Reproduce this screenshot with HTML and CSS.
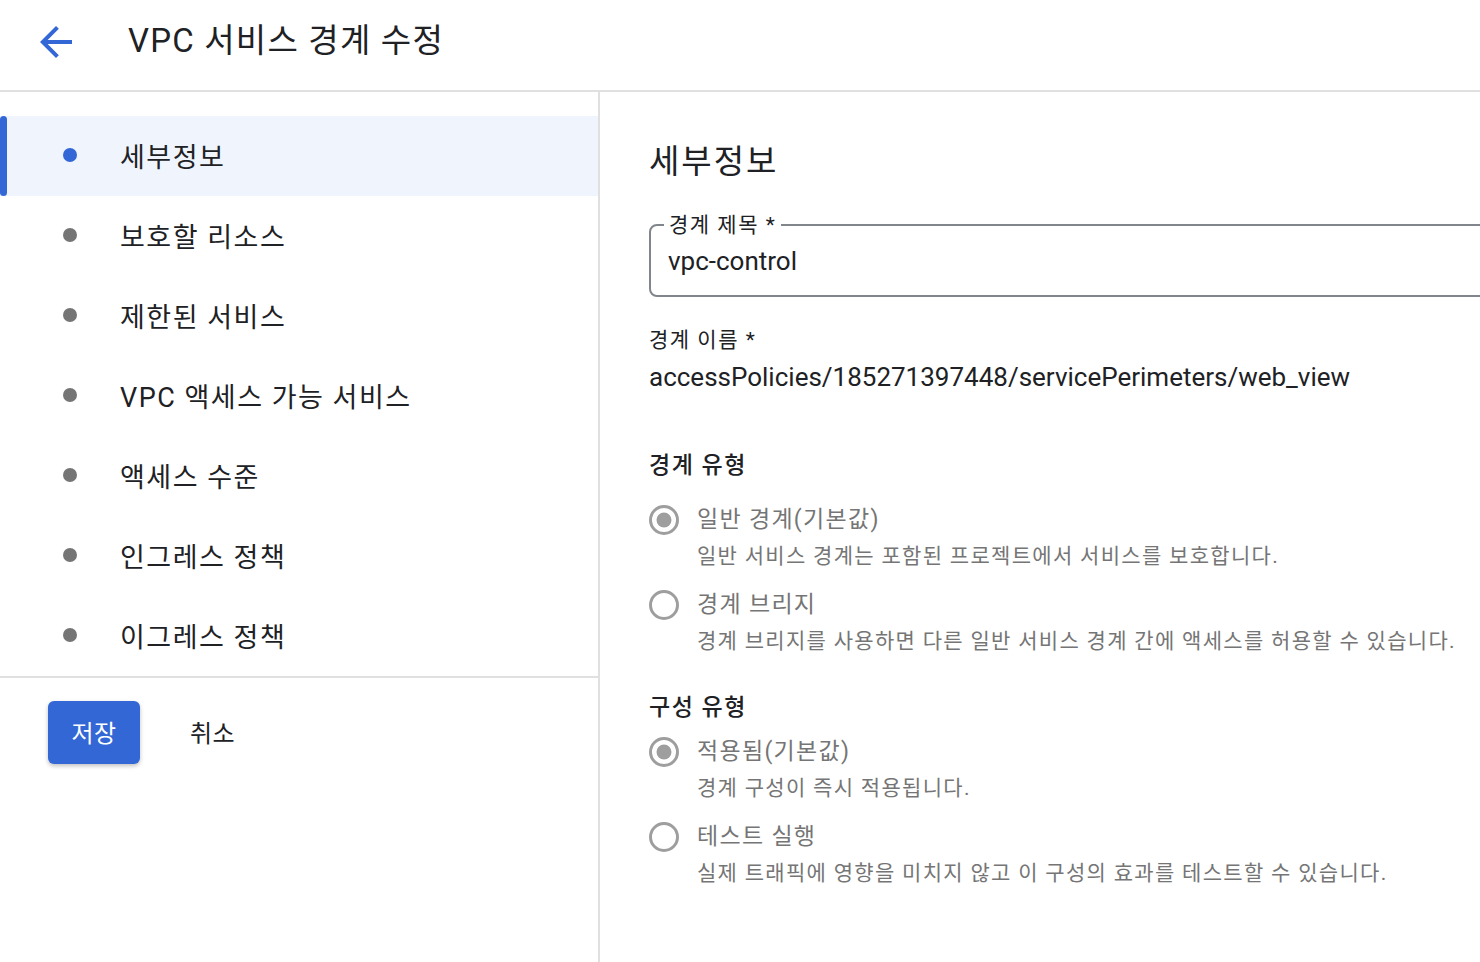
FILE: index.html
```html
<!DOCTYPE html>
<html lang="ko">
<head>
<meta charset="UTF-8">
<meta name="viewport" content="width=device-width, initial-scale=1.0">
<title>VPC 서비스 경계 수정</title>
<link rel="stylesheet" href="styles.css">
</head>
<body>

<header class="topbar">
  <a class="back" href="#" aria-label="뒤로">
    <svg width="48" height="48" viewBox="0 0 24 24"><path d="M20 11H7.83l5.59-5.59L12 4l-8 8 8 8 1.41-1.41L7.83 13H20v-2z" fill="#3367d6"/></svg>
  </a>
  <h1>VPC 서비스 경계 수정</h1>
</header>

<div class="layout">
  <aside class="sidebar">
    <nav class="steps">
      <a class="step active" href="#"><span class="dot"></span>세부정보</a>
      <a class="step" href="#"><span class="dot"></span>보호할 리소스</a>
      <a class="step" href="#"><span class="dot"></span>제한된 서비스</a>
      <a class="step" href="#"><span class="dot"></span>VPC 액세스 가능 서비스</a>
      <a class="step" href="#"><span class="dot"></span>액세스 수준</a>
      <a class="step" href="#"><span class="dot"></span>인그레스 정책</a>
      <a class="step" href="#"><span class="dot"></span>이그레스 정책</a>
    </nav>
    <div class="actions">
      <button class="btn-save" type="button">저장</button>
      <button class="btn-cancel" type="button">취소</button>
    </div>
  </aside>

  <main class="content">
    <h2>세부정보</h2>

    <fieldset class="outlined">
      <legend>경계 제목 *</legend>
      <input type="text" value="vpc-control">
    </fieldset>

    <div class="readonly">
      <div class="ro-label">경계 이름 *</div>
      <div class="ro-value">accessPolicies/185271397448/servicePerimeters/web_view</div>
    </div>

    <h3 class="group-title first">경계 유형</h3>
    <div class="radio">
      <svg class="radio-icon" width="30" height="30" viewBox="0 0 30 30"><circle cx="15" cy="15" r="13.5" fill="none" stroke="#9e9e9e" stroke-width="3"/><circle cx="15" cy="15" r="7.5" fill="#9e9e9e"/></svg>
      <div>
        <div class="radio-label">일반 경계(기본값)</div>
        <div class="radio-desc">일반 서비스 경계는 포함된 프로젝트에서 서비스를 보호합니다.</div>
      </div>
    </div>
    <div class="radio">
      <svg class="radio-icon" width="30" height="30" viewBox="0 0 30 30"><circle cx="15" cy="15" r="13.5" fill="none" stroke="#9e9e9e" stroke-width="3"/></svg>
      <div>
        <div class="radio-label">경계 브리지</div>
        <div class="radio-desc">경계 브리지를 사용하면 다른 일반 서비스 경계 간에 액세스를 허용할 수 있습니다.</div>
      </div>
    </div>

    <h3 class="group-title">구성 유형</h3>
    <div class="radio">
      <svg class="radio-icon" width="30" height="30" viewBox="0 0 30 30"><circle cx="15" cy="15" r="13.5" fill="none" stroke="#9e9e9e" stroke-width="3"/><circle cx="15" cy="15" r="7.5" fill="#9e9e9e"/></svg>
      <div>
        <div class="radio-label">적용됨(기본값)</div>
        <div class="radio-desc">경계 구성이 즉시 적용됩니다.</div>
      </div>
    </div>
    <div class="radio">
      <svg class="radio-icon" width="30" height="30" viewBox="0 0 30 30"><circle cx="15" cy="15" r="13.5" fill="none" stroke="#9e9e9e" stroke-width="3"/></svg>
      <div>
        <div class="radio-label">테스트 실행</div>
        <div class="radio-desc">실제 트래픽에 영향을 미치지 않고 이 구성의 효과를 테스트할 수 있습니다.</div>
      </div>
    </div>
  </main>
</div>

</body>
</html>
```

FILE: styles.css
```css
body {
  font-family: Roboto, "Noto Sans CJK KR", sans-serif;
  margin: 0;
  padding: 0;
  background-color: #fff;
  color: #202124;
  overflow: hidden;
}
.topbar {
  display: flex;
  align-items: center;
  height: 90px;
  border-bottom: 2px solid #e0e0e0;
}
.back {
  display: flex;
  margin-left: 32px;
  margin-right: 48px;
  margin-top: -6px;
}
.topbar h1 {
  margin: 0;
  font-size: 33px;
  font-weight: 400;
  line-height: 40px;
  letter-spacing: 1.2px;
  margin-top: -8px;
}
.layout {
  display: grid;
  grid-template-columns: 600px 1fr;
  min-height: calc(100vh - 92px);
}
.sidebar {
  border-right: 2px solid #e0e0e0;
}
.steps {
  padding-top: 24px;
  border-bottom: 2px solid #e0e0e0;
}
.step {
  display: flex;
  align-items: center;
  height: 80px;
  padding-bottom: 2px;
  box-sizing: border-box;
  font-size: 27px;
  letter-spacing: 1.5px;
  color: #202124;
  text-decoration: none;
  position: relative;
}
.step.active {
  background-color: #eff4fd;
}
.step.active::before {
  content: "";
  position: absolute;
  left: 0;
  top: 0;
  bottom: 0;
  width: 7px;
  border-radius: 4px;
  background-color: #3367d6;
}
.dot {
  width: 14px;
  height: 14px;
  border-radius: 50%;
  background-color: #757575;
  margin-left: 63px;
  margin-right: 43px;
}
.step.active .dot {
  background-color: #3367d6;
}
.actions {
  display: flex;
  align-items: center;
  padding: 23px 0 0 48px;
}
.btn-save {
  width: 92px;
  height: 63px;
  padding: 0 0 3px;
  border: none;
  border-radius: 6px;
  background-color: #3367d6;
  color: #fff;
  font-family: inherit;
  font-size: 24px;
  letter-spacing: 0.5px;
  box-shadow: 0 2px 4px rgba(0, 0, 0, 0.25);
  cursor: pointer;
}
.btn-cancel {
  border: none;
  background: none;
  font-family: inherit;
  font-size: 24px;
  letter-spacing: 0.5px;
  color: #202124;
  margin-left: 40px;
  padding: 0 10px 3px;
  cursor: pointer;
}
.content {
  padding-left: 49px;
  overflow: hidden;
}
.content h2 {
  margin: 50px 0 0;
  font-size: 33px;
  font-weight: 400;
  line-height: 40px;
  letter-spacing: 2px;
}
.outlined {
  width: 1000px;
  margin: 31px 0 0;
  padding: 0 13px 18px;
  border: 2px solid #80868b;
  border-radius: 8px;
}
.outlined legend {
  font-size: 21px;
  line-height: 24px;
  letter-spacing: 1.5px;
  padding: 0 5px;
  color: #202124;
}
.outlined input {
  display: block;
  width: 100%;
  margin-top: 8px;
  padding: 0 4px;
  border: none;
  outline: none;
  font-family: inherit;
  font-size: 26px;
  line-height: 32px;
  height: 32px;
  color: #202124;
  background: none;
}
.readonly {
  margin-top: 31px;
}
.ro-label {
  font-size: 21px;
  line-height: 24px;
  letter-spacing: 1.5px;
}
.ro-value {
  font-size: 26px;
  line-height: 32px;
  margin-top: 9px;
}
.group-title {
  margin: 37px 0 14px;
  font-size: 23px;
  font-weight: 500;
  line-height: 28px;
  letter-spacing: 1.5px;
}
.group-title.first {
  margin-top: 59px;
  margin-bottom: 24px;
}
.radio {
  display: flex;
  margin-bottom: 17px;
}
.radio-icon {
  flex: none;
  margin: 1px 18px 0 0;
}
.radio-label {
  font-size: 23px;
  line-height: 32px;
  letter-spacing: 1.3px;
  color: #757575;
}
.radio-desc {
  font-size: 21px;
  line-height: 32px;
  letter-spacing: 1.3px;
  margin-top: 4px;
  color: #757575;
}
```
